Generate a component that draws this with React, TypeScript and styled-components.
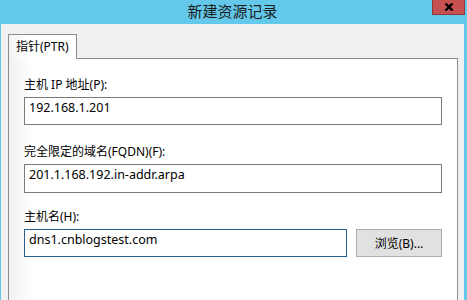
import { FC } from "react";
import styled, { createGlobalStyle } from "styled-components";

const GlobalStyle = createGlobalStyle`
  html, body {
    margin: 0;
    padding: 0;
    width: 467px;
    height: 300px;
    overflow: hidden;
    font-family: "Noto Sans", "Noto Sans CJK SC", sans-serif;
    font-size: 12px;
    color: #000;
  }
`;

const Frame = styled.div`
  width: 467px;
  height: 300px;
  background: #63c8e9;
  display: flex;
  flex-direction: column;
  overflow: hidden;
`;

const TitleBar = styled.div`
  height: 24px;
  flex: 0 0 24px;
  display: grid;
  grid-template-columns: 1fr auto 1fr;
  align-items: start;
  padding-right: 2px;
`;

const Title = styled.div`
  grid-column: 2;
  font-family: "Noto Sans CJK SC", sans-serif;
  font-size: 15px;
  line-height: 22px;
  color: #1b1b1b;
`;

const CloseButton = styled.div`
  grid-column: 3;
  justify-self: end;
  width: 33px;
  height: 15px;
  box-sizing: border-box;
  background: #c75050;
  border: 1px solid #8f3a3a;
  border-top: none;
  display: flex;
  align-items: center;
  justify-content: center;
`;

const Client = styled.div`
  flex: 1;
  margin: 0 3px 0 1px;
  background: #f0f0f0;
  padding: 10px 6px 0 7px;
  display: flex;
  flex-direction: column;
`;

const TabStrip = styled.div`
  display: flex;
  position: relative;
  z-index: 1;
  margin-bottom: -1px;
`;

const Tab = styled.div`
  width: 69px;
  height: 25px;
  box-sizing: border-box;
  border: 1px solid #8a8d93;
  border-bottom: none;
  background: linear-gradient(to right, #f3f3f3, #ffffff 20px);
  padding-left: 7px;
  line-height: 23px;
  font-size: 12px;
`;

const Panel = styled.div`
  flex: 1;
  border: 1px solid #8a8d93;
  border-bottom: none;
  background: linear-gradient(to right, #f1f1f1, #ffffff 24px);
  padding: 18px 15px 0 15px;
`;

const Field = styled.div<{ $gap: number }>`
  margin-top: ${(p) => p.$gap}px;
  display: flex;
  flex-direction: column;
  gap: 4px;
`;

const Label = styled.div`
  line-height: 16px;
  font-size: 12px;
  color: #000;
`;

const Row = styled.div`
  display: flex;
  gap: 9px;
`;

const TextBox = styled.div<{ $height: number; $focused?: boolean }>`
  flex: 1 1 auto;
  height: ${(p) => p.$height}px;
  box-sizing: border-box;
  border: 1px solid ${(p) => (p.$focused ? "#2a5f8f" : "#7a7a7a")};
  background: #fff;
  padding: 2px 4px;
  line-height: 16px;
  font-size: 12.5px;
  color: #000;
  white-space: nowrap;
`;

const Button = styled.div`
  flex: 0 0 86px;
  height: 28px;
  box-sizing: border-box;
  border: 1px solid #adadad;
  background: #e1e1e1;
  display: flex;
  align-items: center;
  justify-content: center;
  font-size: 12px;
  color: #000;
`;

const CloseIcon: FC = () => (
  <svg width="10" height="8" viewBox="0 0 10 8">
    <path d="M1.5 0.5 L8.5 7.5 M8.5 0.5 L1.5 7.5" stroke="#000" strokeWidth="2.4" />
  </svg>
);

export default function App() {
  return (
    <>
      <GlobalStyle />
      <Frame>
        <TitleBar>
          <Title>新建资源记录</Title>
          <CloseButton>
            <CloseIcon />
          </CloseButton>
        </TitleBar>
        <Client>
          <TabStrip>
            <Tab>指针(PTR)</Tab>
          </TabStrip>
          <Panel>
            <Field $gap={0}>
              <Label>主机 IP 地址(P):</Label>
              <TextBox $height={28}>192.168.1.201</TextBox>
            </Field>
            <Field $gap={19}>
              <Label>完全限定的域名(FQDN)(F):</Label>
              <TextBox $height={29}>201.1.168.192.in-addr.arpa</TextBox>
            </Field>
            <Field $gap={16}>
              <Label>主机名(H):</Label>
              <Row>
                <TextBox $height={28} $focused>
                  dns1.cnblogstest.com
                </TextBox>
                <Button>浏览(B)...</Button>
              </Row>
            </Field>
          </Panel>
        </Client>
      </Frame>
    </>
  );
}
